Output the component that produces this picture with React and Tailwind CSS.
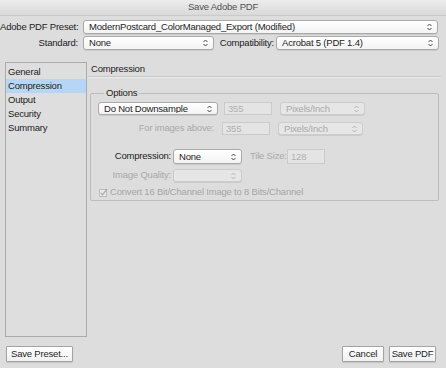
import React from "react";

const font = { fontFamily: '"Liberation Sans", Arial, sans-serif' };

function Arrows({ dim }) {
  return (
    <svg width="5" height="8" viewBox="0 0 5 8" className="shrink-0">
      <path d="M0.5 3 L2.5 1 L4.5 3" fill="none" stroke={dim ? "#b4b4b4" : "#444"} strokeWidth="1" />
      <path d="M0.5 5 L2.5 7 L4.5 5" fill="none" stroke={dim ? "#b4b4b4" : "#444"} strokeWidth="1" />
    </svg>
  );
}

function Select({ w, h = "h-[14px]", children, dim }) {
  return (
    <div
      className={`${w} ${h} flex items-center justify-between pl-[5px] pr-[5px] rounded-[3px] border shadow-[0_1px_0_rgba(0,0,0,0.08)] ${
        dim
          ? "border-[#cdcdcd] bg-[#e6e6e6] text-[#a9a9a9]"
          : "border-[#a9a9a9] bg-gradient-to-b from-white to-[#f3f3f3] text-[#1e1e1e]"
      }`}
    >
      <span className="truncate leading-none">{children}</span>
      <Arrows dim={dim} />
    </div>
  );
}

function Field({ w, h = "h-[13px]", children }) {
  return (
    <div className={`${w} ${h} flex items-center pl-[3px] border border-[#cbcbcb] bg-[#e4e4e4] text-[#b0b0b0] leading-none`}>
      {children}
    </div>
  );
}

function Button({ w, children }) {
  return (
    <div className={`${w} h-[16px] flex items-center justify-center border border-[#a3a3a3] bg-gradient-to-b from-white to-[#f0f0f0] rounded-[1px] shadow-[0_1px_1px_rgba(0,0,0,0.12)] text-[#1e1e1e] leading-none whitespace-nowrap`}>
      {children}
    </div>
  );
}

export default function App() {
  const sections = ["General", "Compression", "Output", "Security", "Summary"];
  return (
    <div
      className="w-[446px] h-[368px] bg-[#dddddd] flex flex-col text-[9.5px] tracking-[-0.2px] text-[#222] overflow-hidden whitespace-nowrap"
      style={font}
    >
      {/* title bar */}
      <div className="h-[16px] bg-gradient-to-b from-[#ececec] to-[#d9d9d9] border-b border-[#cacaca] flex items-center justify-center text-[#505050]">
        Save Adobe PDF
      </div>

      {/* preset row */}
      <div className="flex items-center mt-[4px] h-[14px]">
        <div className="w-[78px] text-right">Adobe PDF Preset:</div>
        <div className="ml-[5px]">
          <Select w="w-[355px]">ModernPostcard_ColorManaged_Export (Modified)</Select>
        </div>
      </div>

      {/* standard row */}
      <div className="flex items-center mt-[2px] h-[14px]">
        <div className="w-[78px] text-right">Standard:</div>
        <div className="ml-[5px]">
          <Select w="w-[131px]">None</Select>
        </div>
        <div className="ml-[5px] w-[57px] text-right pr-[2px]">Compatibility:</div>
        <div>
          <Select w="w-[163px]">Acrobat 5 (PDF 1.4)</Select>
        </div>
      </div>

      {/* body */}
      <div className="flex mt-[12px] h-[275px]">
        <div className="ml-[5px] w-[82px] h-[275px] border border-[#ababab] bg-[#dedede] pt-[2px]">
          {sections.map((s) => (
            <div
              key={s}
              className={`h-[14px] flex items-center pl-[2px] ${s === "Compression" ? "bg-[#b7d6f6]" : ""}`}
            >
              {s}
            </div>
          ))}
        </div>

        <div className="ml-[1px] w-[353px] flex flex-col">
          <div className="h-[14px] flex items-center pl-[3px]">Compression</div>
          <div className="h-[1px] bg-[#c6c6c6] border-b border-[#ececec] box-content" />

          <fieldset className="ml-[2px] mt-[10px] w-[349px] h-[113px] border border-[#bdbdbd] rounded-[2px] pl-[7px]">
            <legend className="ml-[6px] px-[2px] leading-[10px]">Options</legend>

            <div className="flex items-center mt-[4px] h-[13px]">
              <Select w="w-[120px]" h="h-[13px]">Do Not Downsample</Select>
              <div className="ml-[6px]">
                <Field w="w-[48px]">355</Field>
              </div>
              <div className="ml-[8px]">
                <Select w="w-[85px]" h="h-[13px]" dim>Pixels/Inch</Select>
              </div>
            </div>

            <div className="flex items-center mt-[7px] h-[13px]">
              <div className="w-[118px] pr-[2px] text-right text-[#a9a9a9]">For images above:</div>
              <div className="ml-[6px]">
                <Field w="w-[48px]">355</Field>
              </div>
              <div className="ml-[8px]">
                <Select w="w-[85px]" h="h-[13px]" dim>Pixels/Inch</Select>
              </div>
            </div>

            <div className="flex items-center mt-[14px] h-[15px]">
              <div className="w-[73px] text-right">Compression:</div>
              <div className="ml-[2px]">
                <Select w="w-[69px]" h="h-[15px]">None</Select>
              </div>
              <div className="ml-[8px] w-[37px] text-[#a9a9a9]">Tile Size:</div>
              <Field w="w-[38px]" h="h-[15px]">128</Field>
            </div>

            <div className="flex items-center mt-[5px] h-[13px]">
              <div className="w-[73px] text-right text-[#a9a9a9]">Image Quality:</div>
              <div className="ml-[2px]">
                <Select w="w-[69px]" h="h-[13px]" dim></Select>
              </div>
            </div>

            <div className="flex items-center mt-[5px] h-[10px] text-[#a5a5a5]">
              <svg width="9" height="9" viewBox="0 0 9 9" className="shrink-0 ml-[1px]">
                <rect x="0.5" y="1.5" width="7" height="7" fill="#e8e8e8" stroke="#bdbdbd" />
                <path d="M1.8 4.8 L3.6 6.8 L8 0.8" fill="none" stroke="#a8a8a8" strokeWidth="1.2" />
              </svg>
              <span className="ml-[2px]">Convert 16 Bit/Channel Image to 8 Bits/Channel</span>
            </div>
          </fieldset>
        </div>
      </div>

      {/* buttons */}
      <div className="flex items-center mt-[9px] h-[16px]">
        <div className="ml-[6px]">
          <Button w="w-[67px]">Save Preset...</Button>
        </div>
        <div className="ml-auto">
          <Button w="w-[42px]">Cancel</Button>
        </div>
        <div className="ml-[5px] mr-[10px]">
          <Button w="w-[47px]">Save PDF</Button>
        </div>
      </div>
    </div>
  );
}
